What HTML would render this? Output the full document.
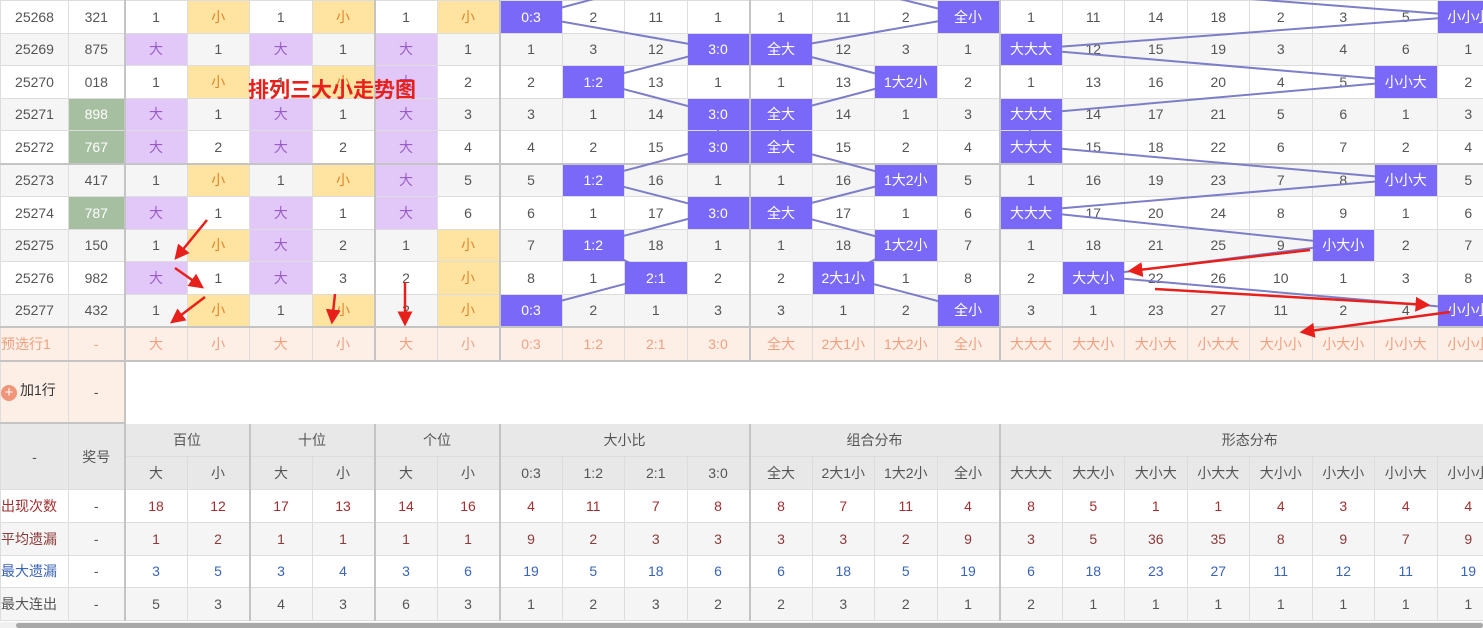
<!DOCTYPE html><html><head><meta charset="utf-8"><style>
body{margin:0;width:1483px;height:628px;overflow:hidden;background:#fff;position:relative;font-family:"Liberation Sans","Noto Sans CJK SC",sans-serif;font-size:14px;color:#555}
table{border-collapse:collapse;table-layout:fixed;width:1499px;position:absolute;left:0;top:0}
td{height:31.5px;padding:0;text-align:center;border:1px solid #ddd;white-space:nowrap;overflow:hidden;line-height:16px}
tr.g td{background:#f5f5f5}
td.e{border-right:2px solid #c4c4c4}
td.y{background:#ffe3a0!important;color:#e0842a}
td.p{background:#e2c8f8!important;color:#9a5cc8}
td.h{background:#7a69f9!important;color:#fff;position:relative;z-index:2}
td.n{background:#a6bfa0!important;color:#fff}
tr.b td{border-bottom:2px solid #c4c4c4}
tr.s td{background:#fdeee6;color:#f0a07f;height:31.5px}
tr.a td{height:60.5px}
tr.hd td{height:32px;background:#e8e8e8}
tr.st td{height:31.8px}
.c1{color:#a03030}.c2{color:#8b3a3a}.c3{color:#3a64b4}
svg{position:absolute;left:0;top:0}
</style></head><body>
<svg width="1483" height="628" style="z-index:1"><g stroke="#7d7dc8" stroke-width="2" fill="none">
<polyline points="530,16 650,-16"/>
<polyline points="530,16 718,49 593,81 718,114 718,146 593,179 718,211 593,244 655,276 530,309"/>
<polyline points="968,16 840,-16"/>
<polyline points="968,16 780,49 905,81 780,114 780,146 905,179 780,211 905,244 843,276 968,309"/>
<polyline points="1468,16 1060,-16"/>
<polyline points="1468,16 1030,49 1405,81 1030,114 1030,146 1405,179 1030,211 1343,244 1093,276 1468,309"/>
</g></svg>
<table>
<colgroup><col style="width:68px"><col style="width:56px"><col span="22" style="width:62.5px"></colgroup>
<tr><td>25268</td><td class="e">321</td><td>1</td><td class="y">小</td><td>1</td><td class="y e">小</td><td>1</td><td class="y e">小</td><td class="h">0:3</td><td>2</td><td>11</td><td class="e">1</td><td>1</td><td>11</td><td>2</td><td class="h e">全小</td><td>1</td><td>11</td><td>14</td><td>18</td><td>2</td><td>3</td><td>5</td><td class="h">小小小</td></tr>
<tr class="g"><td>25269</td><td class="e">875</td><td class="p">大</td><td>1</td><td class="p">大</td><td class="e">1</td><td class="p">大</td><td class="e">1</td><td>1</td><td>3</td><td>12</td><td class="h e">3:0</td><td class="h">全大</td><td>12</td><td>3</td><td class="e">1</td><td class="h">大大大</td><td>12</td><td>15</td><td>19</td><td>3</td><td>4</td><td>6</td><td>1</td></tr>
<tr><td>25270</td><td class="e">018</td><td>1</td><td class="y">小</td><td>1</td><td class="y e">小</td><td class="p">大</td><td class="e">2</td><td>2</td><td class="h">1:2</td><td>13</td><td class="e">1</td><td>1</td><td>13</td><td class="h">1大2小</td><td class="e">2</td><td>1</td><td>13</td><td>16</td><td>20</td><td>4</td><td>5</td><td class="h">小小大</td><td>2</td></tr>
<tr class="g"><td>25271</td><td class="n e">898</td><td class="p">大</td><td>1</td><td class="p">大</td><td class="e">1</td><td class="p">大</td><td class="e">3</td><td>3</td><td>1</td><td>14</td><td class="h e">3:0</td><td class="h">全大</td><td>14</td><td>1</td><td class="e">3</td><td class="h">大大大</td><td>14</td><td>17</td><td>21</td><td>5</td><td>6</td><td>1</td><td>3</td></tr>
<tr class="b"><td>25272</td><td class="n e">767</td><td class="p">大</td><td>2</td><td class="p">大</td><td class="e">2</td><td class="p">大</td><td class="e">4</td><td>4</td><td>2</td><td>15</td><td class="h e">3:0</td><td class="h">全大</td><td>15</td><td>2</td><td class="e">4</td><td class="h">大大大</td><td>15</td><td>18</td><td>22</td><td>6</td><td>7</td><td>2</td><td>4</td></tr>
<tr class="g"><td>25273</td><td class="e">417</td><td>1</td><td class="y">小</td><td>1</td><td class="y e">小</td><td class="p">大</td><td class="e">5</td><td>5</td><td class="h">1:2</td><td>16</td><td class="e">1</td><td>1</td><td>16</td><td class="h">1大2小</td><td class="e">5</td><td>1</td><td>16</td><td>19</td><td>23</td><td>7</td><td>8</td><td class="h">小小大</td><td>5</td></tr>
<tr><td>25274</td><td class="n e">787</td><td class="p">大</td><td>1</td><td class="p">大</td><td class="e">1</td><td class="p">大</td><td class="e">6</td><td>6</td><td>1</td><td>17</td><td class="h e">3:0</td><td class="h">全大</td><td>17</td><td>1</td><td class="e">6</td><td class="h">大大大</td><td>17</td><td>20</td><td>24</td><td>8</td><td>9</td><td>1</td><td>6</td></tr>
<tr class="g"><td>25275</td><td class="e">150</td><td>1</td><td class="y">小</td><td class="p">大</td><td class="e">2</td><td>1</td><td class="y e">小</td><td>7</td><td class="h">1:2</td><td>18</td><td class="e">1</td><td>1</td><td>18</td><td class="h">1大2小</td><td class="e">7</td><td>1</td><td>18</td><td>21</td><td>25</td><td>9</td><td class="h">小大小</td><td>2</td><td>7</td></tr>
<tr><td>25276</td><td class="e">982</td><td class="p">大</td><td>1</td><td class="p">大</td><td class="e">3</td><td>2</td><td class="y e">小</td><td>8</td><td>1</td><td class="h">2:1</td><td class="e">2</td><td>2</td><td class="h">2大1小</td><td>1</td><td class="e">8</td><td>2</td><td class="h">大大小</td><td>22</td><td>26</td><td>10</td><td>1</td><td>3</td><td>8</td></tr>
<tr class="g b"><td>25277</td><td class="e">432</td><td>1</td><td class="y">小</td><td>1</td><td class="y e">小</td><td>2</td><td class="y e">小</td><td class="h">0:3</td><td>2</td><td>1</td><td class="e">3</td><td>3</td><td>1</td><td>2</td><td class="h e">全小</td><td>3</td><td>1</td><td>23</td><td>27</td><td>11</td><td>2</td><td>4</td><td class="h">小小小</td></tr>
<tr class="s b"><td style="text-align:left">预选行1</td><td class="e">-</td><td>大</td><td>小</td><td>大</td><td class="e">小</td><td>大</td><td class="e">小</td><td>0:3</td><td>1:2</td><td>2:1</td><td class="e">3:0</td><td>全大</td><td>2大1小</td><td>1大2小</td><td class="e">全小</td><td>大大大</td><td>大大小</td><td>大小大</td><td>小大大</td><td>大小小</td><td>小大小</td><td>小小大</td><td>小小小</td></tr>
<tr class="a b"><td style="background:#fdeee6;text-align:left;color:#333"><span style="display:inline-block;width:16px;height:16px;border-radius:8px;background:#f0957a;color:#fff;font-size:15px;line-height:16px;text-align:center;vertical-align:-2px;margin-right:3px">+</span>加1行</td><td class="e" style="background:#fdeee6">-</td><td colspan="22" style="border-color:#fff"></td></tr>
<tr class="hd"><td rowspan="2" class="e" style="border-right:1px solid #ddd">-</td><td rowspan="2" class="e">奖号</td><td colspan="2" class="e">百位</td><td colspan="2" class="e">十位</td><td colspan="2" class="e">个位</td><td colspan="4" class="e">大小比</td><td colspan="4" class="e">组合分布</td><td colspan="8">形态分布</td></tr>
<tr class="hd"><td>大</td><td class="e">小</td><td>大</td><td class="e">小</td><td>大</td><td class="e">小</td><td>0:3</td><td>1:2</td><td>2:1</td><td class="e">3:0</td><td>全大</td><td>2大1小</td><td>1大2小</td><td class="e">全小</td><td>大大大</td><td>大大小</td><td>大小大</td><td>小大大</td><td>大小小</td><td>小大小</td><td>小小大</td><td>小小小</td></tr>
<tr class="c1 st"><td style="text-align:left">出现次数</td><td class="e" style="color:#555">-</td><td>18</td><td class="e">12</td><td>17</td><td class="e">13</td><td>14</td><td class="e">16</td><td>4</td><td>11</td><td>7</td><td class="e">8</td><td>8</td><td>7</td><td>11</td><td class="e">4</td><td>8</td><td>5</td><td>1</td><td>1</td><td>4</td><td>3</td><td>4</td><td>4</td></tr>
<tr class="g c2 st"><td style="text-align:left">平均遗漏</td><td class="e" style="color:#555">-</td><td>1</td><td class="e">2</td><td>1</td><td class="e">1</td><td>1</td><td class="e">1</td><td>9</td><td>2</td><td>3</td><td class="e">3</td><td>3</td><td>3</td><td>2</td><td class="e">9</td><td>3</td><td>5</td><td>36</td><td>35</td><td>8</td><td>9</td><td>7</td><td>9</td></tr>
<tr class="c3 st"><td style="text-align:left">最大遗漏</td><td class="e" style="color:#555">-</td><td>3</td><td class="e">5</td><td>3</td><td class="e">4</td><td>3</td><td class="e">6</td><td>19</td><td>5</td><td>18</td><td class="e">6</td><td>6</td><td>18</td><td>5</td><td class="e">19</td><td>6</td><td>18</td><td>23</td><td>27</td><td>11</td><td>12</td><td>11</td><td>19</td></tr>
<tr class="g st"><td style="text-align:left">最大连出</td><td class="e">-</td><td>5</td><td class="e">3</td><td>4</td><td class="e">3</td><td>6</td><td class="e">3</td><td>1</td><td>2</td><td>3</td><td class="e">2</td><td>2</td><td>3</td><td>2</td><td class="e">1</td><td>2</td><td>1</td><td>1</td><td>1</td><td>1</td><td>1</td><td>1</td><td>1</td></tr>
</table>
<div style="position:absolute;left:0;top:622px;width:1483px;height:6px;background:#f0f0f0;z-index:5"><div style="position:absolute;left:16px;top:1px;width:1467px;height:5px;background:#a8a8a8;border-radius:3px"></div></div>
<div style="position:absolute;left:248px;top:75px;font-size:21px;font-weight:bold;color:#e8201c;z-index:4;font-family:'Noto Sans CJK SC',sans-serif;line-height:28px">排列三大小走势图</div>
<svg width="1483" height="628" style="z-index:3"><defs><marker id="m" markerWidth="6" markerHeight="6" refX="5" refY="3" orient="auto"><path d="M0,0L6,3L0,6z" fill="#e8201c"/></marker></defs>
<g stroke="#e8201c" stroke-width="2.5" marker-end="url(#m)">
<line x1="207" y1="220" x2="176" y2="258"/><line x1="175" y1="268" x2="202" y2="287"/><line x1="205" y1="297" x2="172" y2="322"/>
<line x1="335" y1="294" x2="332" y2="322"/><line x1="405" y1="282" x2="405" y2="324"/>
<line x1="1310" y1="250" x2="1130" y2="271"/><line x1="1155" y1="289" x2="1428" y2="305"/><line x1="1450" y1="312" x2="1302" y2="332"/>
</g></svg>
</body></html>
